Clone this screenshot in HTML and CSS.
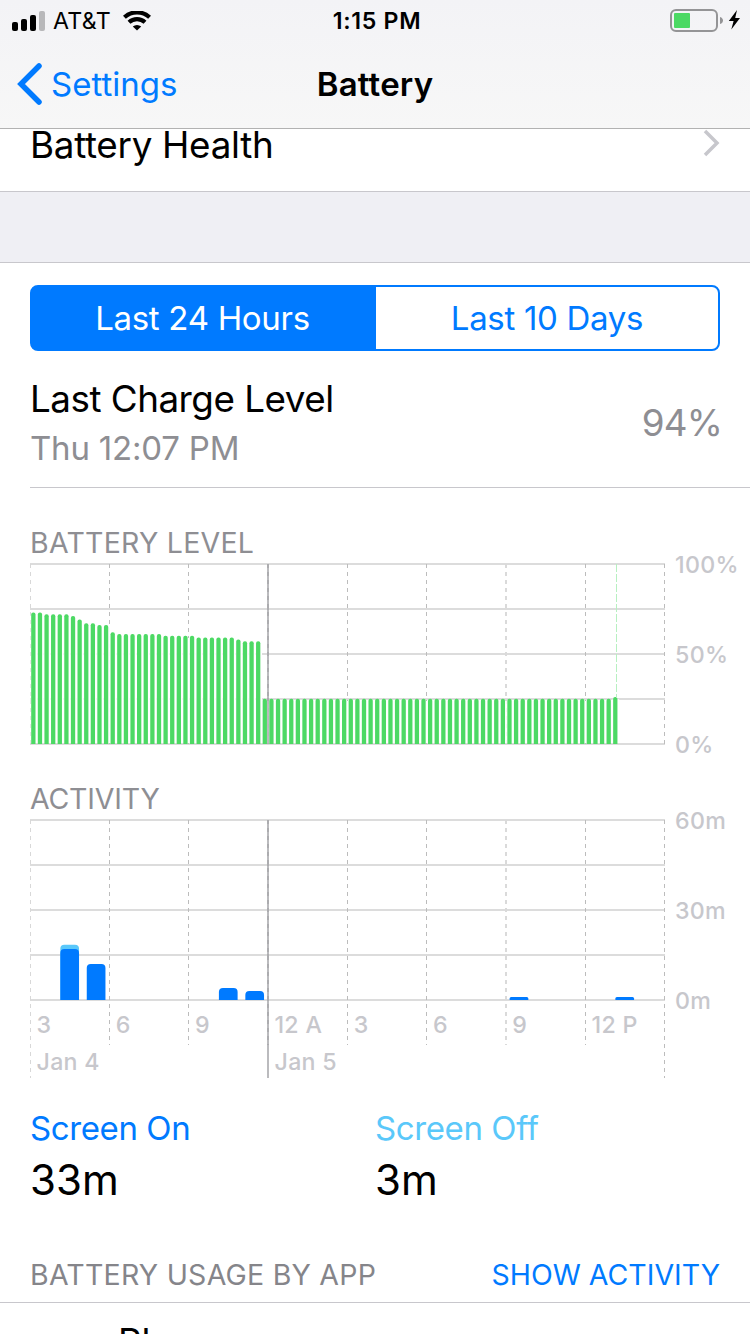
FILE: index.html
```
<!DOCTYPE html>
<html lang="en">
<head>
  <meta charset="UTF-8" />
  <meta name="viewport" content="width=device-width, initial-scale=1" />
  <title>Battery</title>
  <link rel="stylesheet" href="styles.css">
</head>
<body>

  <header>
    <!-- Status bar -->
    <div class="status-bar">
      <div class="status-left">
        <svg class="signal" width="33" height="20" viewBox="0 0 33 20">
          <rect x="0" y="11" width="6" height="9" rx="2" />
          <rect x="9" y="8" width="6" height="12" rx="2" />
          <rect x="18" y="4" width="6" height="16" rx="2" />
          <rect class="off" x="27" y="0" width="6" height="20" rx="2" />
        </svg>
        <span class="carrier">AT&amp;T</span>
        <svg class="wifi" width="28" height="20" viewBox="0 0 28 20">
          <path d="M1.4 6.3A18.500 18.500 0 0 1 26.6 6.3" />
          <path d="M6 11.2A11.800 11.800 0 0 1 22 11.2" />
          <path class="dot" d="M14 19.6L9.8 15.6A6.2 6.2 0 0 1 18.2 15.6Z" />
        </svg>
      </div>
      <div class="clock">1:15 PM</div>
      <div class="status-right">
        <svg width="72" height="24" viewBox="0 0 72 24">
          <rect class="case" x="1" y="1" width="46" height="21" rx="5" />
          <rect class="charge" x="4" y="4" width="16" height="15" rx="1" />
          <path class="nub" d="M50 8C52 8.500 53 10 53 11.500S52 14.500 50 15Z" />
          <path class="bolt" d="M67 1L58.800 12H63.600L61.300 20.600L70 9H65.200Z" />
        </svg>
      </div>
    </div>

    <!-- Nav bar -->
    <div class="nav-bar">
      <div class="back">
        <svg width="25" height="42" viewBox="0 0 25 42"><path d="M22 3L4 21L22 39" /></svg>
        <span>Settings</span>
      </div>
      <h1>Battery</h1>
    </div>
  </header>

  <div class="row health">
    <span>Battery Health</span>
    <svg width="17" height="28" viewBox="0 0 17 28"><path d="M2 2L14 14L2 26" /></svg>
  </div>

  <div class="gap"></div>

  <div class="segmented">
    <div class="segment selected">Last 24 Hours</div>
    <div class="segment">Last 10 Days</div>
  </div>

  <div class="charge-row">
    <div>
      <div class="charge-title">Last Charge Level</div>
      <div class="charge-time">Thu 12:07 PM</div>
    </div>
    <div class="charge-value">94%</div>
  </div>

  <h2 class="level-title">BATTERY LEVEL</h2>
  <svg id="level-chart" class="chart" width="720" height="212" viewBox="30 552 720 212"></svg>

  <h2 class="activity-title">ACTIVITY</h2>
  <svg id="activity-chart" class="chart" width="720" height="275" viewBox="30 805 720 275"></svg>

  <div class="totals">
    <div class="total">
      <div class="label on">Screen On</div>
      <div class="value">33m</div>
    </div>
    <div class="total">
      <div class="label screen-off">Screen Off</div>
      <div class="value">3m</div>
    </div>
  </div>

  <div class="usage-header">
    <span class="usage-title">BATTERY USAGE BY APP</span>
    <span class="show-activity">SHOW ACTIVITY</span>
  </div>
  <div class="app-row">Phone</div>

  <script>
    const LEFT = 30;
    const STEP = 79.3;   // three hours
    const RIGHT = 665;

    // [level, number of quarter hours]
    const levels = [
      [73, 2], [72, 4], [71, 1], [69, 1], [67, 2], [66, 2], [62, 1], [61, 7],
      [60, 5], [59, 6], [58, 1], [57, 3], [25, 53], [26, 1]
    ];

    // minutes per hour slot
    const activity = [
      { hour: 1, on: 17, total: 18.4 },
      { hour: 2, on: 12 },
      { hour: 7, on: 4 },
      { hour: 8, on: 3 },
      { hour: 18, on: 1 },
      { hour: 22, on: 1 }
    ];

    function rect(x, y, w, h, cls) {
      return `<rect class="${cls}" x="${x}" y="${y}" width="${w}" height="${h}" />`;
    }

    function line(x1, y1, x2, y2, cls) {
      return `<line class="${cls}" x1="${x1}" y1="${y1}" x2="${x2}" y2="${y2}" />`;
    }

    function text(x, y, str) {
      return `<text x="${x}" y="${y}">${str}</text>`;
    }

    function roundedBar(x, top, bottom, w, r, cls) {
      r = Math.min(r, (bottom - top) / 2);
      return `<path class="${cls}" d="M${x} ${bottom}V${top + r}Q${x} ${top} ${x + r} ${top}H${x + w - r}Q${x + w} ${top} ${x + w} ${top + r}V${bottom}Z" />`;
    }

    function grid(top, shortEnd, longEnd) {
      let out = '';
      for (let i = 0; i < 5; i++) {
        out += line(LEFT, top + i * 45, RIGHT, top + i * 45, 'grid-h');
      }
      for (let i = 0; i < 9; i++) {
        const end = (i === 0 || i === 8) ? longEnd : shortEnd;
        const wide = i === 3 || i === 6;
        const x = wide ? Math.round(LEFT + STEP * i) : Math.floor(LEFT + STEP * i) + 0.5;
        out += line(x, top, x, end, i === 0 ? 'grid-v faint' : wide ? 'grid-v wide' : 'grid-v');
      }
      return out;
    }

    // Battery level
    let level = grid(564, 744, 744);
    let n = 0;
    for (const [value, count] of levels) {
      for (let i = 0; i < count; i++, n++) {
        const x = 31.2 + n * 6.613;
        const top = 744 - value * 1.8;
        level += rect(x - 0.6, top + 2, 6.6, 742 - top - 1, 'backing');
        level += roundedBar(x, top - 0.2, 744, 4.3, 2, 'level');
      }
    }
    level += line(616.5, 564, 616.5, 698, 'now');
    level += line(268, 564, 268, 744, 'midnight');
    level += text(675, 573, '100%') + text(675, 663, '50%') + text(675, 753, '0%');
    document.getElementById('level-chart').innerHTML = level;

    // Activity
    let act = grid(820, 1045, 1078);
    for (const bar of activity) {
      const x = 30 + bar.hour * 26.43 + 3.9;
      if (bar.total) act += roundedBar(x, 1000 - bar.total * 3, 1000, 18.7, 4, 'screen-off');
      act += roundedBar(x, 1000 - bar.on * 3, 1000, 18.7, 4, 'screen-on');
    }
    act += line(268, 820, 268, 1078, 'midnight');
    act += text(675, 829, '60m') + text(675, 919, '30m') + text(675, 1009, '0m');
    ['3', '6', '9', '12 A', '3', '6', '9', '12 P'].forEach((label, i) => {
      act += text(36.5 + i * STEP, 1033, label);
    });
    act += text(36.5, 1070, 'Jan 4') + text(274.5, 1070, 'Jan 5');
    document.getElementById('activity-chart').innerHTML = act;
  </script>

</body>
</html>
```
FILE: styles.css
```
* {
  box-sizing: border-box;
}

body {
  margin: 0;
  width: 750px;
  height: 1334px;
  overflow: hidden;
  background: #fff;
  color: #000;
  font-family: Inter, "Liberation Sans", sans-serif;
  font-size: 33px;
  white-space: nowrap;
}

h1, h2 {
  margin: 0;
}

header {
  height: 129px;
  background: linear-gradient(#f3f3f6, #f7f7f7);
  border-bottom: 1px solid #b2b2b2;
}

/* Status bar */
.status-bar {
  display: grid;
  grid-template-columns: 1fr auto 1fr;
  align-items: center;
  height: 41px;
  padding: 0 8px 0 12px;
  font-size: 23.2px;
}

.status-left {
  display: flex;
  align-items: center;
}

.signal .off {
  fill: #b8b8ba;
}

.carrier {
  margin-left: 8px;
  letter-spacing: 0.3px;
}

.wifi {
  margin-left: 12px;
}

.wifi path {
  fill: none;
  stroke: #000;
  stroke-width: 4.2;
}

.wifi .dot {
  fill: #000;
  stroke: none;
}

.clock {
  font-weight: 600;
  letter-spacing: 0.7px;
}

.status-right {
  display: flex;
  justify-content: flex-end;
}

.case {
  fill: none;
  stroke: #949496;
  stroke-width: 2;
}

.charge {
  fill: #4cd964;
}

.nub {
  fill: #949496;
}

/* Nav bar */
.nav-bar {
  display: grid;
  grid-template-columns: 1fr auto 1fr;
  align-items: center;
  height: 86px;
  padding: 0 17px;
}

.back {
  display: flex;
  align-items: center;
  gap: 9px;
  color: #007aff;
}

.back path {
  fill: none;
  stroke: #007aff;
  stroke-width: 5.5;
  stroke-linecap: round;
}

h1 {
  font-size: 33px;
  font-weight: 600;
  letter-spacing: 0.2px;
}

.row {
  display: flex;
  justify-content: space-between;
  padding: 0 30px;
  border-bottom: 1px solid #c8c7cc;
}

.health {
  height: 63px;
  font-size: 36.8px;
  letter-spacing: -0.3px;
  line-height: 32px;
}

.health path {
  fill: none;
  stroke: #c7c7cc;
  stroke-width: 3.5;
}

.gap {
  height: 71px;
  background: #efeff4;
  border-bottom: 1px solid #c8c7cc;
}

/* Range switch */
.segmented {
  display: flex;
  height: 66px;
  margin: 22px 30px 0;
  border: 2px solid #007aff;
  border-radius: 8px;
  background: linear-gradient(90deg, #007aff 50%, #fff 50%);
  overflow: hidden;
}

.segment {
  width: 342px;
  color: #007aff;
  letter-spacing: -0.3px;
  line-height: 62px;
  text-align: center;
}

.segment.selected {
  width: 344px;
  padding-right: 3px;
  background: #007aff;
  color: #fff;
}

.charge-row {
  display: flex;
  justify-content: space-between;
  height: 137px;
  margin-left: 30px;
  padding: 26px 28px 0 0;
  border-bottom: 1px solid #c8c7cc;
}

.charge-title {
  font-size: 36.8px;
  letter-spacing: -0.5px;
  line-height: 44px;
}

.charge-time {
  line-height: 54px;
  letter-spacing: -0.2px;
  color: #8e8e93;
}

.charge-value {
  font-size: 36.8px;
  letter-spacing: -0.8px;
  line-height: 92px;
  color: #8e8e93;
}

/* Charts */
h2 {
  padding-left: 30px;
  font-size: 28.5px;
  font-weight: 400;
  color: #8e8e93;
}

.level-title {
  height: 64px;
  padding-top: 37px;
  letter-spacing: 0.25px;
  line-height: 36px;
}

.activity-title {
  height: 41px;
  padding-top: 16px;
  letter-spacing: -0.2px;
  line-height: 37px;
}

.chart {
  display: block;
  margin-left: 30px;
}

.chart text {
  font-size: 23.2px;
  font-weight: 500;
  letter-spacing: 0.3px;
  fill: #c7c7cc;
}

.grid-h {
  stroke: #dcdcdc;
  stroke-width: 2;
}

.grid-v {
  stroke: #bcbcbc;
  stroke-width: 1;
  stroke-dasharray: 4 4;
}

.grid-v.faint {
  stroke: #d8d8d8;
}

.grid-v.wide {
  stroke: #dadada;
  stroke-width: 2;
}

.midnight {
  stroke: #8e8e93;
  stroke-opacity: 0.6;
  stroke-width: 2;
}

.backing {
  fill: #fff;
}

.level {
  fill: #4cd964;
}

.now {
  stroke: #b7f0c1;
  stroke-width: 1;
  stroke-dasharray: 8 2;
}

.chart .screen-on {
  fill: #007aff;
}

.chart .screen-off {
  fill: #5ac8fa;
}

.totals {
  display: grid;
  grid-template-columns: 345px 345px;
  margin: 26px 30px 0;
}

.label {
  line-height: 44px;
  letter-spacing: -0.4px;
  color: #007aff;
}

.label.screen-off {
  color: #5ac8fa;
}

.value {
  font-size: 42px;
  line-height: 60px;
}

.usage-header {
  display: flex;
  justify-content: space-between;
  height: 93px;
  padding: 37px 30px 0;
  border-bottom: 1px solid #c8c7cc;
  font-size: 28.5px;
  line-height: 56px;
}

.usage-title {
  letter-spacing: 0.23px;
  color: #85858a;
}

.show-activity {
  color: #007aff;
}

.app-row {
  height: 31px;
  padding: 17px 0 0 118px;
  overflow: hidden;
  font-size: 36.8px;
  line-height: 44px;
}
```
